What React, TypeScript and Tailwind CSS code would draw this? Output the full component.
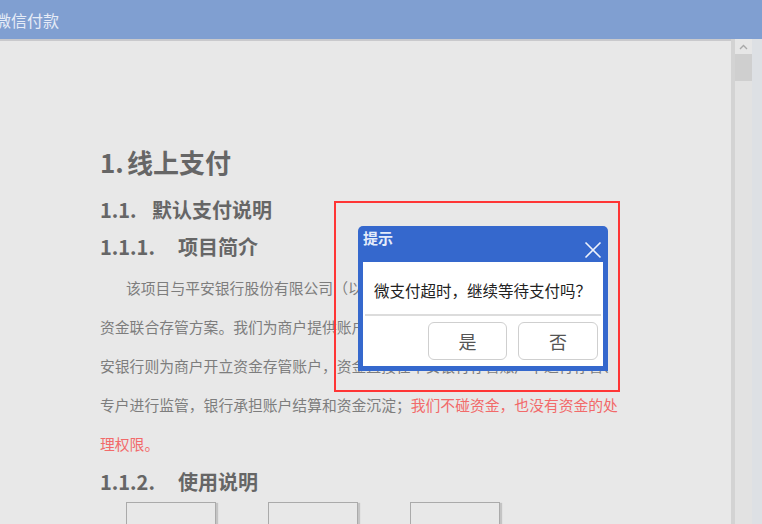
import React from "react";

const font = { fontFamily: '"Microsoft YaHei", "Noto Sans CJK SC", "Noto Sans", sans-serif' };

const ConfirmDialog = () => (
  <div className="absolute left-[358px] top-[226px] w-[250px] h-[145px] bg-[#3568cd] rounded-t-[5px] flex flex-col">
    <div className="h-[36px] flex items-start justify-between pl-[5px] pr-[5px]">
      <span className="text-[15px] font-bold text-[#e4ecfa] leading-[24px]">提示</span>
      <svg width="18" height="18" viewBox="0 0 18 18" className="mt-[15px] mr-[1px]">
        <path d="M1.5 1.5 L16.5 16.5 M16.5 1.5 L1.5 16.5" stroke="#eef2fb" strokeWidth="1.6" fill="none" />
      </svg>
    </div>
    <div className="mx-[5px] mb-[5px] flex-1 bg-white flex flex-col">
      <div className="h-[52px] pt-[16px] pl-[11px] text-[15.5px] leading-[24px] text-[#222] whitespace-nowrap">
        微支付超时，继续等待支付吗？
      </div>
      <div className="h-[2px] mx-[2px] bg-[#dcdcdc]" />
      <div className="flex justify-end gap-[11px] pr-[5px] mt-[6px]">
        <button className="w-[79px] h-[38px] rounded-[6px] border border-[#cfcfcf] bg-white text-[18px] text-[#555]">
          是
        </button>
        <button className="w-[80px] h-[38px] rounded-[6px] border border-[#cfcfcf] bg-white text-[18px] text-[#555]">
          否
        </button>
      </div>
    </div>
  </div>
);

const Scrollbar = () => (
  <div className="flex h-full">
    <div className="w-[4px] bg-[#d3d3d3]" />
    <div className="w-[17px] bg-[#e2e2e2] flex flex-col">
      <div className="h-[15px] flex items-center justify-center bg-[#e6e6e6]">
        <svg width="9" height="6" viewBox="0 0 9 6">
          <path d="M1 5 L4.5 1.5 L8 5" stroke="#a8a8a8" strokeWidth="1.4" fill="none" />
        </svg>
      </div>
      <div className="h-[27px] bg-[#cfcfcf]" />
    </div>
    <div className="w-[10px] bg-[#dde0e4]" />
  </div>
);

export default function App() {
  return (
    <div className="relative w-[762px] h-[524px] overflow-hidden bg-[#e8e8e8] flex flex-col" style={font}>
      <div className="h-[39px] shrink-0 bg-[#809fd1] flex items-center">
        <span className="ml-[-5px] text-[16px] text-[#e6ecf7]">微信付款</span>
      </div>
      <div className="h-[2px] shrink-0 bg-[#c9c9cc] mr-[31px]" />
      <div className="flex flex-1 min-h-0 mt-[-2px]">
        <div className="flex-1 pl-[100px] pt-[105px] text-[#666]">
          <h1 className="text-[26px] font-bold leading-[36px]">
            <span className="inline-block w-[27px]">1.</span>线上支付
          </h1>
          <h2 className="mt-[15px] text-[20px] font-bold leading-[30px] flex">
            <span className="w-[52px]">1.1.</span>默认支付说明
          </h2>
          <h3 className="mt-[7px] text-[20px] font-bold leading-[30px] flex">
            <span className="w-[78px]">1.1.1.</span>项目简介
          </h3>
          <div className="mt-[6px] text-[14.8px] leading-[39px] text-[#7d7d7d] whitespace-nowrap">
            <div className="pl-[26px]">该项目与平安银行股份有限公司（以下简称平安银行）合作推出</div>
            <div>资金联合存管方案。我们为商户提供账户系统、支付结算、数据核算服务，平</div>
            <div>安银行则为商户开立资金存管账户，资金直接在平安银行存管账户中进行存管、</div>
            <div>
              专户进行监管，银行承担账户结算和资金沉淀；
              <span className="text-[#f26a6a]">我们不碰资金，也没有资金的处</span>
            </div>
            <div className="text-[#f26a6a]">理权限。</div>
          </div>
          <h3 className="mt-[4px] text-[20px] font-bold leading-[30px] flex">
            <span className="w-[78px]">1.1.2.</span>使用说明
          </h3>
          <div className="mt-[5px] ml-[26px] flex gap-[52px]">
            <div className="w-[90px] h-[40px] border border-[#aaa] shadow-[2px_1px_1px_#c4c4c4]" />
            <div className="w-[90px] h-[40px] border border-[#aaa] shadow-[2px_1px_1px_#c4c4c4]" />
            <div className="w-[90px] h-[40px] border border-[#aaa] shadow-[2px_1px_1px_#c4c4c4]" />
          </div>
        </div>
        <Scrollbar />
      </div>

      <div className="absolute left-[334px] top-[201px] w-[286px] h-[191px] border-2 border-[#ff3535]" />
      <ConfirmDialog />
    </div>
  );
}
